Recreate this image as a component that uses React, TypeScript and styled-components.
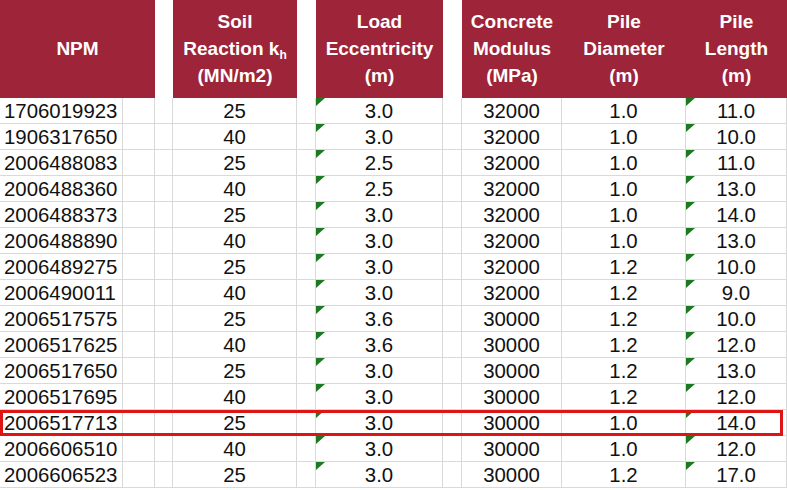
import React from "react";
import styled, { createGlobalStyle, css } from "styled-components";

const Global = createGlobalStyle`
  html, body { margin: 0; padding: 0; background: #ffffff; }
  body { overflow: hidden; font-family: "Liberation Sans", Arial, sans-serif; }
`;

const COLS = "123px 32px 18px 124px 19px 127px 19px 100px 124px 101px";
const HEADER_RED = "#9d2439";
const GRID = "#d9d9d9";

const Sheet = styled.div`
  width: 787px;
  display: flex;
  flex-direction: column;
`;

const HeaderRow = styled.div`
  display: grid;
  grid-template-columns: ${COLS};
  height: 98px;
`;

const HeaderCell = styled.div<{ $span?: number }>`
  grid-column: span ${(p) => p.$span ?? 1};
  background: ${HEADER_RED};
  color: #ffffff;
  font-weight: bold;
  font-size: 19px;
  line-height: 27px;
  display: flex;
  align-items: center;
  justify-content: center;
  text-align: center;
  padding-bottom: 1px;
`;

const HeaderGap = styled.div`
  background: #ffffff;
`;

const HeaderGroup = styled.div`
  grid-column: span 3;
  display: grid;
  grid-template-columns: 100px 124px 101px;
  background: ${HEADER_RED};
`;

const Sub = styled.sub`
  font-size: 12px;
  vertical-align: -4px;
  line-height: 0;
`;

const Row = styled.div<{ $highlight?: boolean }>`
  display: grid;
  grid-template-columns: ${COLS};
  height: 26px;
  position: relative;
  ${(p) =>
    p.$highlight &&
    css`
      &::after {
        content: "";
        position: absolute;
        left: 0;
        top: 0;
        width: 783px;
        height: 26px;
        box-sizing: border-box;
        border: 3px solid #dd1515;
        pointer-events: none;
      }
    `}
`;

const Cell = styled.div<{ $align?: "left" | "center"; $flag?: boolean }>`
  position: relative;
  box-sizing: border-box;
  border-right: 1px solid ${GRID};
  border-bottom: 1px solid ${GRID};
  font-size: 20.4px;
  line-height: 26px;
  color: #111111;
  text-align: ${(p) => (p.$align === "left" ? "left" : "center")};
  padding-left: ${(p) => (p.$align === "left" ? "4px" : "0")};
  white-space: nowrap;
  overflow: hidden;
  ${(p) =>
    p.$flag &&
    css`
      &::before {
        content: "";
        position: absolute;
        left: 0;
        top: 0;
        width: 0;
        height: 0;
        border-top: 8px solid #1b7a1f;
        border-right: 9px solid transparent;
      }
    `}
`;

type Rec = [string, string, string, string, string, string];

const data: Rec[] = [
  ["1706019923", "25", "3.0", "32000", "1.0", "11.0"],
  ["1906317650", "40", "3.0", "32000", "1.0", "10.0"],
  ["2006488083", "25", "2.5", "32000", "1.0", "11.0"],
  ["2006488360", "40", "2.5", "32000", "1.0", "13.0"],
  ["2006488373", "25", "3.0", "32000", "1.0", "14.0"],
  ["2006488890", "40", "3.0", "32000", "1.0", "13.0"],
  ["2006489275", "25", "3.0", "32000", "1.2", "10.0"],
  ["2006490011", "40", "3.0", "32000", "1.2", "9.0"],
  ["2006517575", "25", "3.6", "30000", "1.2", "10.0"],
  ["2006517625", "40", "3.6", "30000", "1.2", "12.0"],
  ["2006517650", "25", "3.0", "30000", "1.2", "13.0"],
  ["2006517695", "40", "3.0", "30000", "1.2", "12.0"],
  ["2006517713", "25", "3.0", "30000", "1.0", "14.0"],
  ["2006606510", "40", "3.0", "30000", "1.0", "12.0"],
  ["2006606523", "25", "3.0", "30000", "1.2", "17.0"],
];

export default function App() {
  return (
    <>
      <Global />
      <Sheet>
        <HeaderRow>
          <HeaderCell $span={2}>NPM</HeaderCell>
          <HeaderGap />
          <HeaderCell>
            <div>
              Soil
              <br />
              Reaction k<Sub>h</Sub>
              <br />
              (MN/m2)
            </div>
          </HeaderCell>
          <HeaderGap />
          <HeaderCell>
            <div>
              Load
              <br />
              Eccentricity
              <br />
              (m)
            </div>
          </HeaderCell>
          <HeaderGap />
          <HeaderGroup>
            <HeaderCell>
              <div>
                Concrete
                <br />
                Modulus
                <br />
                (MPa)
              </div>
            </HeaderCell>
            <HeaderCell>
              <div>
                Pile
                <br />
                Diameter
                <br />
                (m)
              </div>
            </HeaderCell>
            <HeaderCell>
              <div>
                Pile
                <br />
                Length
                <br />
                (m)
              </div>
            </HeaderCell>
          </HeaderGroup>
        </HeaderRow>
        {data.map((r, i) => (
          <Row key={r[0]} $highlight={i === 12}>
            <Cell $align="left">{r[0]}</Cell>
            <Cell />
            <Cell />
            <Cell>{r[1]}</Cell>
            <Cell />
            <Cell $flag>{r[2]}</Cell>
            <Cell />
            <Cell>{r[3]}</Cell>
            <Cell>{r[4]}</Cell>
            <Cell $flag>{r[5]}</Cell>
          </Row>
        ))}
      </Sheet>
    </>
  );
}
